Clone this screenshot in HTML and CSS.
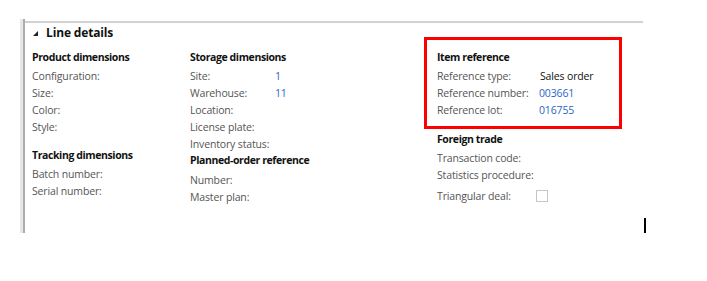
FILE: index.html
```html
<!DOCTYPE html>
<html>
<head>
  <title>Line details</title>
  <link rel="stylesheet" href="styles.css">
</head>
<body>
  <div class="panel">
    <div class="panel-inner">
      <!-- Collapsible header -->
      <div class="panel-header">
        <svg class="caret" width="5" height="5" viewBox="0 0 5 5"><polygon points="5,0 5,5 0,5" fill="#222"/></svg>
        <span>Line details</span>
      </div>

      <div class="panel-body">
        <!-- Product / tracking -->
        <div class="col col-product">
          <div class="group-title">Product dimensions</div>
          <div class="field"><span class="label">Configuration:</span></div>
          <div class="field"><span class="label">Size:</span></div>
          <div class="field"><span class="label">Color:</span></div>
          <div class="field"><span class="label">Style:</span></div>

          <div class="group-title spaced">Tracking dimensions</div>
          <div class="field"><span class="label">Batch number:</span></div>
          <div class="field"><span class="label">Serial number:</span></div>
        </div>

        <!-- Storage / planned order -->
        <div class="col col-storage">
          <div class="group-title">Storage dimensions</div>
          <div class="field"><span class="label">Site:</span><span class="value link">1</span></div>
          <div class="field"><span class="label">Warehouse:</span><span class="value link">11</span></div>
          <div class="field"><span class="label">Location:</span></div>
          <div class="field"><span class="label">License plate:</span></div>
          <div class="field"><span class="label">Inventory status:</span></div>

          <div class="group-title tight">Planned-order reference</div>
          <div class="field"><span class="label">Number:</span></div>
          <div class="field"><span class="label">Master plan:</span></div>
        </div>

        <!-- Item reference / foreign trade -->
        <div class="col col-reference">
          <div class="highlight">
            <div class="group-title">Item reference</div>
            <div class="field"><span class="label">Reference type:</span><span class="value plain">Sales order</span></div>
            <div class="field"><span class="label">Reference number:</span><span class="value link">003661</span></div>
            <div class="field"><span class="label">Reference lot:</span><span class="value link">016755</span></div>
          </div>

          <div class="group-title foreign">Foreign trade</div>
          <div class="field"><span class="label">Transaction code:</span></div>
          <div class="field"><span class="label">Statistics procedure:</span></div>
          <div class="field check-row"><span class="label">Triangular deal:</span><span class="checkbox"></span></div>
        </div>
      </div>

      <div class="cursor"></div>
    </div>
  </div>
</body>
</html>
```

FILE: styles.css
```css
/* Page */
body {
  margin: 0;
  background-color: #fff;
  font-family: "Open Sans", "Noto Sans", sans-serif;
  font-size: 10.5px;
  letter-spacing: -0.15px;
  color: #555;
}

/* Panel with two-tone left rule */
.panel {
  margin: 19px 0 0 20px;
  width: 620px;
  height: 214px;
  border-left: 3px solid #e6e6e6;
}

.panel-inner {
  position: relative;
  height: 100%;
  padding-top: 2px;
  box-sizing: border-box;
  border-left: 2px solid #acacac;
}

/* Header */
.panel-header {
  display: flex;
  align-items: center;
  height: 18px;
  border-top: 2px solid #d2d2d2;
  padding-left: 8px;
  font-size: 12px;
  font-weight: bold;
  color: #111;
}

.caret {
  margin: 3px 8px 0 0;
}

/* Body columns */
.panel-body {
  display: grid;
  grid-template-columns: 158px 247px 200px;
  padding: 8px 0 0 7px;
}

.group-title {
  line-height: 17px;
  margin-bottom: 1px;
  font-weight: bold;
  letter-spacing: -0.4px;
  color: #111;
}

.group-title.spaced {
  margin-top: 12px;
}

.group-title.tight {
  margin-bottom: 2px;
}

.group-title.foreign {
  margin-top: 2px;
}

.field {
  display: flex;
  align-items: center;
  height: 17px;
}

.label {
  flex-shrink: 0;
  white-space: nowrap;
}

.col-storage .label {
  width: 85px;
}

.col-reference .label {
  width: 102px;
}

.value.link {
  color: #2a66c4;
}

.value.plain {
  color: #111;
  padding-left: 1px;
}

/* Red annotation box */
.highlight {
  width: 198px;
  box-sizing: border-box;
  margin: -12px 0 0 -13px;
  padding: 9px 0 8px 10px;
  border: 3px solid #ff0000;
}

/* Checkbox row */
.check-row {
  margin-top: 4px;
}

.checkbox {
  width: 10px;
  height: 10px;
  margin-left: -3px;
  border: 1px solid #c6c6c6;
  background-color: #fff;
}

/* Text cursor at the panel edge */
.cursor {
  position: absolute;
  right: -3px;
  bottom: 0;
  width: 2px;
  height: 15px;
  background-color: #000;
}
```
